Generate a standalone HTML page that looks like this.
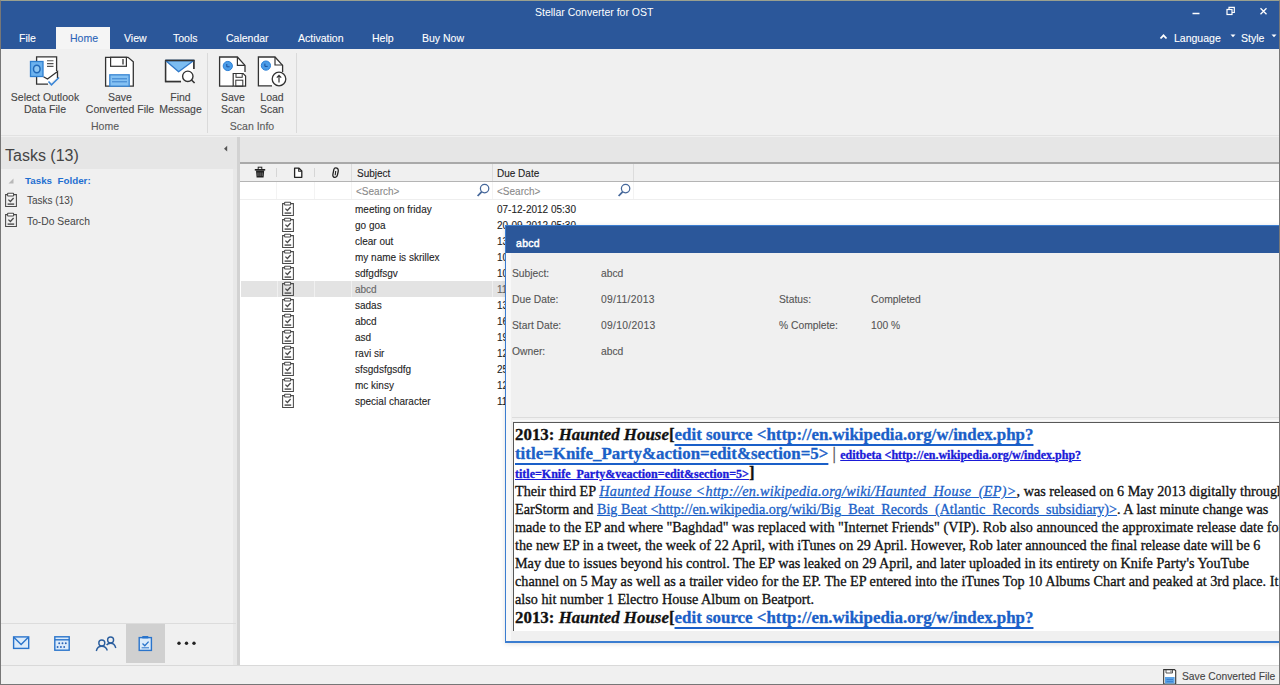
<!DOCTYPE html>
<html><head><meta charset="utf-8">
<style>
*{margin:0;padding:0;box-sizing:border-box}
html,body{width:1280px;height:685px;overflow:hidden;background:#fff;font-family:"Liberation Sans",sans-serif}
.tab,.rl,.gl,.row,.pl{-webkit-text-stroke:0.1px currentColor}
.a{position:absolute}
#win{position:absolute;left:0;top:0;width:1280px;height:685px;background:#f0f0f0;overflow:hidden}
.tab{top:27px;height:22px;color:#fff;font-size:10.5px;line-height:23px;white-space:nowrap}
.tab.sel{background:#f5f5f5;color:#2b64b8}
.rl{font-size:10.5px;color:#454545;text-align:center;line-height:12px;white-space:nowrap}
.gl{font-size:10.5px;color:#5a5a5a;text-align:center;white-space:nowrap;line-height:12px}
.row{font-size:10px;color:#1e1e1e;white-space:nowrap;line-height:16px;height:16px}
.pl{font-size:10.3px;color:#555;white-space:nowrap;line-height:12px}
#doc{font-family:"Liberation Serif",serif;font-size:14px;line-height:18px;color:#111;-webkit-text-stroke:0.3px currentColor}
#doc a{color:#1a5fc8;text-decoration:underline}
#doc .h{font-weight:bold;font-size:16.9px;line-height:19px;white-space:nowrap}
#doc .h a{text-underline-offset:3.5px;text-decoration-thickness:1.6px}
#doc .h .s a{text-underline-offset:auto;text-decoration-thickness:auto}
#doc .b{white-space:nowrap;font-size:14.2px;line-height:18px}
#doc .it{letter-spacing:0.3px}
#doc .s{font-size:12px;font-weight:bold;color:#1a1ad8}
#doc .s a{color:#1a1ad8}
</style></head><body>
<div id="win">
 <div class="a" style="left:0;top:0;width:1280px;height:49px;background:#2b579a"></div>
 <div class="a" style="left:535px;top:6px;color:#fff;font-size:10.5px;line-height:12px;white-space:nowrap">Stellar Converter for OST</div>
 <div class="a tab" style="left:19px">File</div>
 <div class="a tab sel" style="left:56px;width:54px;padding-left:14px">Home</div>
 <div class="a tab" style="left:124px">View</div>
 <div class="a tab" style="left:173px">Tools</div>
 <div class="a tab" style="left:226px">Calendar</div>
 <div class="a tab" style="left:298px">Activation</div>
 <div class="a tab" style="left:372px">Help</div>
 <div class="a tab" style="left:422px">Buy Now</div>
 <div class="a tab" style="left:1174px">Language</div>
 <div class="a tab" style="left:1241px">Style</div>

 <!-- ribbon -->
 <div class="a" style="left:0;top:49px;width:1280px;height:87px;background:#f0f0f0;border-bottom:1px solid #e2e2e2"></div>
 <div class="a" style="left:207px;top:53px;width:1px;height:80px;background:#dadada"></div>
 <div class="a" style="left:296px;top:53px;width:1px;height:80px;background:#dadada"></div>
 <div class="a rl" style="left:0;top:91px;width:90px">Select Outlook<br>Data File</div>
 <div class="a rl" style="left:80px;top:91px;width:80px">Save<br>Converted File</div>
 <div class="a rl" style="left:150px;top:91px;width:61px">Find<br>Message</div>
 <div class="a gl" style="left:65px;top:120px;width:80px">Home</div>
 <div class="a rl" style="left:213px;top:91px;width:40px">Save<br>Scan</div>
 <div class="a rl" style="left:252px;top:91px;width:40px">Load<br>Scan</div>
 <div class="a gl" style="left:212px;top:120px;width:80px">Scan Info</div>

 <!-- left pane -->
 <div class="a" style="left:0;top:137px;width:237px;height:528px;background:#f0f0f0"></div>
 <div class="a" style="left:0;top:137px;width:237px;height:32px;background:#e6e6e6"></div>
 <div class="a" style="left:5px;top:146px;font-size:16px;line-height:19px;color:#444">Tasks (13)</div>
 <div class="a" style="left:25px;top:174px;font-size:9.8px;line-height:13px;font-weight:bold;color:#1f6fd0">Tasks&nbsp; Folder:</div>
 <div class="a" style="left:27px;top:194px;font-size:10px;line-height:13px;color:#444">Tasks (13)</div>
 <div class="a" style="left:27px;top:215px;font-size:10.3px;line-height:13px;color:#444">To-Do Search</div>
 <div class="a" style="left:233px;top:169px;width:4px;height:496px;background:#e8e8e8"></div>
 <div class="a" style="left:237px;top:137px;width:3px;height:528px;background:#d2d2d2"></div>

 <!-- right area -->
 <div class="a" style="left:240px;top:137px;width:1040px;height:25px;background:#e6e6e6"></div>
 <div class="a" style="left:240px;top:162px;width:1040px;height:503px;background:#fff"></div>
 <div class="a" style="left:240px;top:162px;width:1040px;height:20px;background:#f0f0f0;border-top:2px solid #a9a9a9;border-bottom:1px solid #b4b4b4"></div>
 <div class="a" style="left:276px;top:168px;width:1px;height:9px;background:#d6d6d6"></div>
 <div class="a" style="left:314px;top:168px;width:1px;height:9px;background:#d6d6d6"></div>
 <div class="a" style="left:351px;top:164px;width:1px;height:17px;background:#dcdcdc"></div>
 <div class="a" style="left:492px;top:164px;width:1px;height:17px;background:#dcdcdc"></div>
 <div class="a" style="left:633px;top:164px;width:1px;height:17px;background:#dcdcdc"></div>
 <div class="a" style="left:240px;top:199px;width:1040px;height:1px;background:#eeeeee"></div>
 <div class="a" style="left:276px;top:182px;width:1px;height:17px;background:#f3f3f3"></div>
 <div class="a" style="left:314px;top:182px;width:1px;height:17px;background:#f3f3f3"></div>
 <div class="a" style="left:351px;top:182px;width:1px;height:17px;background:#f3f3f3"></div>
 <div class="a" style="left:492px;top:182px;width:1px;height:17px;background:#f3f3f3"></div>
 <div class="a" style="left:633px;top:182px;width:1px;height:17px;background:#f3f3f3"></div>
 <div class="a row" style="left:357px;top:166px">Subject</div>
 <div class="a row" style="left:497px;top:166px">Due Date</div>
 <div class="a row" style="left:356px;top:184px;color:#8a8a8a">&lt;Search&gt;</div>
 <div class="a row" style="left:497px;top:184px;color:#8a8a8a">&lt;Search&gt;</div>
 <!-- selected row -->
 <div class="a" style="left:241px;top:281px;width:264px;height:16px;background:#e3e3e3"></div>
 <div class="a" style="left:277px;top:281px;width:1px;height:16px;background:#f0f0f0"></div>
 <div class="a" style="left:314px;top:281px;width:1px;height:16px;background:#f0f0f0"></div>
 <div class="a" style="left:351px;top:281px;width:1px;height:16px;background:#f0f0f0"></div>
 <div class="a" style="left:492px;top:281px;width:1px;height:16px;background:#f0f0f0"></div>
<div class="a row" style="left:355px;top:202px">meeting on friday</div><div class="a row" style="left:497px;top:202px">07-12-2012 05:30</div>
<div class="a row" style="left:355px;top:218px">go goa</div><div class="a row" style="left:497px;top:218px">20-09-2012 05:30</div>
<div class="a row" style="left:355px;top:234px">clear out</div><div class="a row" style="left:497px;top:234px">13-09-2012 05:30</div>
<div class="a row" style="left:355px;top:250px">my name is skrillex</div><div class="a row" style="left:497px;top:250px">10-09-2012 05:30</div>
<div class="a row" style="left:355px;top:266px">sdfgdfsgv</div><div class="a row" style="left:497px;top:266px">10-09-2012 05:30</div>
<div class="a row" style="left:355px;top:282px;color:#666">abcd</div><div class="a row" style="left:497px;top:282px;color:#666">11-09-2013 05:30</div>
<div class="a row" style="left:355px;top:298px">sadas</div><div class="a row" style="left:497px;top:298px">13-09-2012 05:30</div>
<div class="a row" style="left:355px;top:314px">abcd</div><div class="a row" style="left:497px;top:314px">16-09-2012 05:30</div>
<div class="a row" style="left:355px;top:330px">asd</div><div class="a row" style="left:497px;top:330px">19-09-2012 05:30</div>
<div class="a row" style="left:355px;top:346px">ravi sir</div><div class="a row" style="left:497px;top:346px">12-09-2012 05:30</div>
<div class="a row" style="left:355px;top:362px">sfsgdsfgsdfg</div><div class="a row" style="left:497px;top:362px">25-09-2012 05:30</div>
<div class="a row" style="left:355px;top:378px">mc kinsy</div><div class="a row" style="left:497px;top:378px">12-09-2012 05:30</div>
<div class="a row" style="left:355px;top:394px">special character</div><div class="a row" style="left:497px;top:394px">11-09-2012 05:30</div>

 <!-- bottom nav -->
 <div class="a" style="left:0;top:623px;width:236px;height:1px;background:#dcdcdc"></div>
 <div class="a" style="left:126px;top:624px;width:39px;height:39px;background:#d0d0d0"></div>

 <!-- status bar -->
 <div class="a" style="left:0;top:665px;width:1280px;height:20px;background:#f0f0f0;border-top:1px solid #d9d9d9"></div>
 <div class="a" style="left:1182px;top:671px;font-size:10.3px;line-height:12px;color:#444;white-space:nowrap;-webkit-text-stroke:0.1px #444">Save Converted File</div>

 <svg class="a" style="left:0;top:0" width="1280" height="685" viewBox="0 0 1280 685">
  <defs>
   <g id="clip" fill="none" stroke="#4a4a4a" stroke-width="1.05">
    <path d="M284.6 203.6 H282.6 V215.5 H293.4 V203.6 H290.6"/>
    <rect x="284.6" y="202.3" width="6" height="2.6" rx="0.5" fill="#fff"/>
    <path d="M285.4 208.6 L287.4 210.5 L290.6 207" stroke-width="1.25"/>
    <path d="M284.6 213.1 H291.2" stroke-width="1.4"/>
   </g>
  </defs>
  <!-- window controls -->
  <path d="M1192.5 13.5 H1199.5" stroke="#fff" stroke-width="1.5"/>
  <g fill="none" stroke="#fff" stroke-width="1.2">
   <rect x="1227" y="9.5" width="5" height="5"/>
   <path d="M1229 9.5 V7.3 H1234.3 V12.5 H1232"/>
  </g>
  <path d="M1260.5 8.3 L1266.5 14.3 M1266.5 8.3 L1260.5 14.3" stroke="#fff" stroke-width="1.3"/>
  <path d="M1160.5 38.5 L1163.5 35.3 L1166.5 38.5" stroke="#fff" stroke-width="1.8" fill="none"/>
  <path d="M1230.5 34.5 H1235.5 L1233 37.2 Z" fill="#fff"/>
  <path d="M1271.5 34.5 H1276.5 L1274 37.2 Z" fill="#fff"/>

  <!-- ribbon icon: select outlook -->
  <path d="M36.6 56.8 H56.6 V78 L48 84.2 H36.6 Z" fill="#fff"/>
  <g fill="none" stroke="#333" stroke-width="1.3">
   <path d="M36.6 61 V56.8 H56.6 V71 M36.6 77 V84.2 H48"/>
   <path d="M43.5 76.8 L47.5 79 L57.5 71.5 V78"/>
  </g>
  <path d="M47 60.8 H53.5 M47 63.6 H53.5 M47 66.4 H53.5" stroke="#555" stroke-width="1.1"/>
  <rect x="30.5" y="61.5" width="12.5" height="15" fill="#6cb2ee" stroke="#2f7fcf" stroke-width="1.3"/>
  <ellipse cx="36.8" cy="69" rx="3.3" ry="3.8" fill="#8ec6f2" stroke="#2269b8" stroke-width="1.5"/>
  <path d="M48.5 81.5 L51.5 84.8 L59 77.5" fill="none" stroke="#3b86d6" stroke-width="1.6"/>

  <!-- save converted file -->
  <path d="M105.6 57.3 H128 L133.3 61.8 V86.2 H105.6 Z" fill="#fff" stroke="#333" stroke-width="1.3"/>
  <rect x="110.6" y="57.3" width="15.8" height="9" fill="#fff" stroke="#333" stroke-width="1.2"/>
  <path d="M123 59 V64.5" stroke="#333" stroke-width="1.3"/>
  <rect x="109.8" y="74.8" width="19.4" height="11.4" fill="#84c1f3" stroke="#3a86d3" stroke-width="1.3"/>
  <path d="M112 78.8 H127 M112 81.8 H127" stroke="#3a7fcb" stroke-width="1"/>

  <!-- find message -->
  <path d="M165.6 60.5 H193.8 V69 M165.6 60.5 V81.5 H181" fill="#fff" stroke="#333" stroke-width="1.4"/>
  <rect x="166.3" y="61.2" width="27" height="19.6" fill="#fff"/>
  <path d="M165.6 60.5 V81.5 H181 M193.8 60.5 V69" fill="none" stroke="#333" stroke-width="1.4"/>
  <path d="M165.6 60.5 H193.8 L178.6 71.8 Z" fill="#7cbdf2" stroke="#2f78c8" stroke-width="1.3" stroke-linejoin="round"/>
  <path d="M165 60.5 H194.5" stroke="#333" stroke-width="1.5"/>
  <circle cx="187.8" cy="76.3" r="5.2" fill="#fff" stroke="#333" stroke-width="1.4"/>
  <path d="M191.5 80 L194.6 83" stroke="#333" stroke-width="1.6"/>

  <!-- save scan -->
  <path d="M219.6 57 H237.4 L245 65.4 V86.2 H219.6 Z" fill="#fff"/><path d="M233 86.2 H219.6 V57 H237.4 L245 65.4 V72" fill="none" stroke="#333" stroke-width="1.3"/>
  <path d="M237.4 57 V65.4 H245" fill="none" stroke="#333" stroke-width="1.2"/>
  <path d="M233.2 73.5 H243.2 L245.6 76 V86.2 H233.2 Z" fill="#fff" stroke="#333" stroke-width="1.2"/>
  <rect x="236" y="73.5" width="6.2" height="3.8" fill="none" stroke="#333" stroke-width="1"/>
  <rect x="235.8" y="80.2" width="7" height="6" fill="none" stroke="#333" stroke-width="1"/>
  <circle cx="227.8" cy="66" r="4.6" fill="#4a9ce8" stroke="#2b7fd6" stroke-width="1"/>
  <path d="M226.8 64 V66.8 H229.6" fill="none" stroke="#1b4f9a" stroke-width="1"/>

  <!-- load scan -->
  <path d="M258.4 57 H275 L282.6 65.4 V85.8 H258.4 Z" fill="#fff"/><path d="M272 85.8 H258.4 V57 H275 L282.6 65.4 V72" fill="none" stroke="#333" stroke-width="1.3"/>
  <path d="M275 57 V65 H282.6" fill="none" stroke="#333" stroke-width="1.2"/>
  <circle cx="279" cy="79" r="6.8" fill="#fff" stroke="#333" stroke-width="1.3"/>
  <path d="M279 82.6 V75.5 M276.8 77.6 L279 75.3 L281.2 77.6" fill="none" stroke="#333" stroke-width="1.2"/>
  <circle cx="265.9" cy="65.6" r="4.6" fill="#4a9ce8" stroke="#2b7fd6" stroke-width="1"/>
  <path d="M264.9 63.6 V66.4 H267.7" fill="none" stroke="#1b4f9a" stroke-width="1"/>

  <!-- pane collapse arrow -->
  <path d="M224 148.7 L227.2 145.8 V151.6 Z" fill="#555"/>
  <!-- tree expander -->
  <path d="M13.5 178.5 V183.5 H8.5 Z" fill="#b8b8b8"/>
  <!-- left tree clipboards -->
  <g transform="translate(-277,-9)"><use href="#clip"/></g>
  <g transform="translate(-277,11)"><use href="#clip"/></g>

  <!-- header icons -->
  <g fill="#222">
   <rect x="254.8" y="169" width="10.4" height="1.6"/>
   <rect x="258.2" y="167.2" width="3.6" height="2.3" fill="none" stroke="#222" stroke-width="1"/>
   <path d="M256 170.6 H264.2 L263.6 177.6 H256.6 Z"/>
  </g>
  <path d="M258 172.5 V176 M260.1 172.5 V176 M262.2 172.5 V176" stroke="#888" stroke-width="0.8"/>
  <path d="M294.6 168.2 H299 L301.8 171 V177.3 H294.6 Z" fill="#fff" stroke="#222" stroke-width="1.3" stroke-linejoin="round"/>
  <path d="M298.7 168.2 V171.2 H301.8" fill="none" stroke="#222" stroke-width="1.1"/>
  <path d="M335.6 167.8 C337.8 167.8 338.6 169.5 338.2 171.5 L337.4 175.2 C337 177 335.8 177.6 334.6 177.4 C333.2 177.2 332.6 176 332.9 174.4 L333.8 169.6 C334.1 168.4 334.7 167.8 335.6 167.8 Z" fill="none" stroke="#222" stroke-width="1.3"/><path d="M335.7 171 L335.2 175.3" stroke="#222" stroke-width="1.1"/>

  <use href="#clip" x="0" y="0"/>
  <use href="#clip" x="0" y="16"/>
  <use href="#clip" x="0" y="32"/>
  <use href="#clip" x="0" y="48"/>
  <use href="#clip" x="0" y="64"/>
  <use href="#clip" x="0" y="80"/>
  <use href="#clip" x="0" y="96"/>
  <use href="#clip" x="0" y="112"/>
  <use href="#clip" x="0" y="128"/>
  <use href="#clip" x="0" y="144"/>
  <use href="#clip" x="0" y="160"/>
  <use href="#clip" x="0" y="176"/>
  <use href="#clip" x="0" y="192"/>

  <g fill="none" stroke="#45679a" stroke-width="1.25">
   <circle cx="484.6" cy="188.6" r="4.2"/><path d="M481.6 191.8 L477.6 196" stroke-width="1.8"/>
   <circle cx="625.6" cy="188.6" r="4.2"/><path d="M622.6 191.8 L618.6 196" stroke-width="1.8"/>
  </g>
  <!-- bottom nav icons -->
  <rect x="13.6" y="636.9" width="15.1" height="11.5" fill="#dcebfa" stroke="#2a74cb" stroke-width="1.4"/>
  <path d="M13.8 637.2 L21.1 644.6 L28.4 637.2" fill="none" stroke="#2a74cb" stroke-width="1.4"/>
  <rect x="54.8" y="636.8" width="14.4" height="13.4" fill="#dcebfa" stroke="#2a74cb" stroke-width="1.4"/>
  <path d="M54.8 639.8 H69.2" stroke="#2a74cb" stroke-width="1.4"/>
  <g fill="#2a64b8">
   <circle cx="59.2" cy="643.3" r="0.95"/><circle cx="62.5" cy="643.3" r="0.95"/><circle cx="65.8" cy="643.3" r="0.95"/>
   <circle cx="57.6" cy="647" r="0.95"/><circle cx="60.9" cy="647" r="0.95"/><circle cx="64.2" cy="647" r="0.95"/>
  </g>
  <g fill="none" stroke="#2b5e9e" stroke-width="1.4">
   <circle cx="101.8" cy="643" r="3"/>
   <path d="M96.3 651 C97 647.5 99.2 646.2 101.8 646.2 C104.4 646.2 106.5 647.5 107.3 650.5"/>
   <circle cx="110.6" cy="640" r="3"/>
   <path d="M106.6 645 C107.6 643.6 109 643.2 110.6 643.2 C113.2 643.2 115 644.8 115.8 648"/>
  </g>
  <rect x="139.2" y="637.6" width="12.2" height="12.8" fill="#dcebfa" stroke="#2a74cb" stroke-width="1.4"/>
  <rect x="142.3" y="636" width="6" height="2.4" fill="#2a74cb"/>
  <path d="M142.5 643.5 L144.8 645.8 L148.6 641.6" fill="none" stroke="#2a74cb" stroke-width="1.3"/>
  <path d="M141.6 647.8 H149" stroke="#2a74cb" stroke-width="1"/>
  <g fill="#222"><circle cx="179" cy="643.3" r="1.7"/><circle cx="186.5" cy="643.3" r="1.7"/><circle cx="194" cy="643.3" r="1.7"/></g>

  <!-- status floppy -->
  <path d="M1163.7 669.6 H1174.5 L1175.7 670.8 V684 H1163.7 Z" fill="#fff" stroke="#333" stroke-width="1.1"/>
  <path d="M1166 670 V673 H1172.5 V670 M1171 670.5 V672.5" fill="none" stroke="#444" stroke-width="0.9"/>
  <rect x="1165" y="677" width="9.6" height="6.5" fill="#5aa2e6"/>
  <path d="M1166.5 679.5 H1173 M1166.5 681.6 H1173" stroke="#2c73c4" stroke-width="0.7"/>
 </svg>

 <!-- popup -->
 <div class="a" style="left:505px;top:225px;width:800px;height:418px;background:#f0f0f0;border:2px solid #3b7dd0;border-top-width:1px;border-left-width:1px;box-shadow:0 1px 5px rgba(0,0,0,0.13)"></div>
 <div class="a" style="left:506px;top:226px;width:780px;height:27px;background:#2b579a"></div>
 <div class="a" style="left:506px;top:253px;width:5px;height:388px;background:#f8f8f8"></div>
 <div class="a" style="left:516px;top:237px;color:#fff;font-size:10.5px;line-height:12px;letter-spacing:0.3px;-webkit-text-stroke:0.45px #fff">abcd</div>
 <div class="a pl" style="left:512px;top:268px">Subject:</div>
 <div class="a pl" style="left:601px;top:268px">abcd</div>
 <div class="a pl" style="left:512px;top:294px">Due Date:</div>
 <div class="a pl" style="left:601px;top:294px;letter-spacing:0.3px">09/11/2013</div>
 <div class="a pl" style="left:779px;top:294px">Status:</div>
 <div class="a pl" style="left:871px;top:294px">Completed</div>
 <div class="a pl" style="left:512px;top:320px">Start Date:</div>
 <div class="a pl" style="left:601px;top:320px;letter-spacing:0.3px">09/10/2013</div>
 <div class="a pl" style="left:779px;top:320px">% Complete:</div>
 <div class="a pl" style="left:871px;top:320px">100 %</div>
 <div class="a pl" style="left:512px;top:346px">Owner:</div>
 <div class="a pl" style="left:601px;top:346px">abcd</div>

 <div class="a" style="left:512px;top:417px;width:800px;height:1px;background:#dcdcdc"></div>
 <div class="a" style="left:512px;top:420px;width:800px;height:1px;background:#fafafa"></div>
 <div class="a" style="left:513px;top:422px;width:800px;height:209px;background:#fff;border-top:1px solid #585858;border-left:1px solid #585858;overflow:hidden">
  <div id="doc" style="position:absolute;left:-1px;top:-1px;width:900px">
   <div class="h a" style="left:2px;top:3px"><span>2013: </span><i>Haunted House</i>[<a>edit source &lt;http://en.wikipedia.org/w/index.php?</a></div>
   <div class="h a" style="left:2px;top:22px"><a>title=Knife_Party&amp;action=edit&amp;section=5&gt;</a> <span style="font-weight:normal;color:#555">|</span> <span class="s"><a>editbeta &lt;http://en.wikipedia.org/w/index.php?</a></span></div>
   <div class="h a" style="left:2px;top:41px"><span class="s"><a>title=Knife_Party&amp;veaction=edit&amp;section=5&gt;</a></span>]</div>
   <div class="a b" style="left:2px;top:60px">Their third EP <a class="it"><i>Haunted House &lt;http://en.wikipedia.org/wiki/Haunted_House_(EP)&gt;</i></a>, was released on 6 May 2013 digitally through</div>
   <div class="a b" style="left:2px;top:78px">EarStorm and <a>Big Beat &lt;http://en.wikipedia.org/wiki/Big_Beat_Records_(Atlantic_Records_subsidiary)&gt;</a>. A last minute change was</div>
   <div class="a b" style="left:2px;top:96px">made to the EP and where "Baghdad" was replaced with "Internet Friends" (VIP). Rob also announced the approximate release date for</div>
   <div class="a b" style="left:2px;top:114px">the new EP in a tweet, the week of 22 April, with iTunes on 29 April. However, Rob later announced the final release date will be 6</div>
   <div class="a b" style="left:2px;top:132px">May due to issues beyond his control. The EP was leaked on 29 April, and later uploaded in its entirety on Knife Party's YouTube</div>
   <div class="a b" style="left:2px;top:150px">channel on 5 May as well as a trailer video for the EP. The EP entered into the iTunes Top 10 Albums Chart and peaked at 3rd place. It</div>
   <div class="a b" style="left:2px;top:168px">also hit number 1 Electro House Album on Beatport.</div>
   <div class="h a" style="left:2px;top:186px"><span>2013: </span><i>Haunted House</i>[<a>edit source &lt;http://en.wikipedia.org/w/index.php?</a></div>
  </div>
 </div>
 <!-- window border -->
 <div class="a" style="left:0;top:0;width:1280px;height:685px;border:1px solid #777;border-top-color:#9aa08f"></div>
</div>
</body></html>
